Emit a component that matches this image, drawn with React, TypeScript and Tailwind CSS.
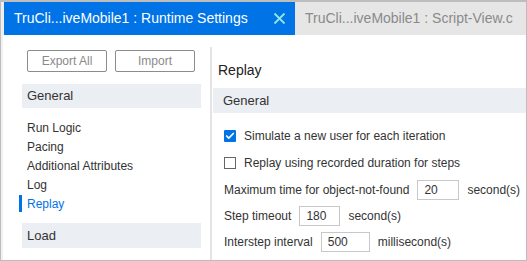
import { Check } from 'lucide-react'

const NAV = ['Run Logic', 'Pacing', 'Additional Attributes', 'Log', 'Replay']

function Field({ label, value, unit, width }: { label: string; value: string; unit: string; width: string }) {
  return (
    <div className="flex items-center h-[20px]">
      <span>{label}</span>
      <div className={`ml-[8px] h-[20px] ${width} border border-[#c8c8c8] bg-white px-[6px] flex items-center`}>{value}</div>
      <span className="ml-[8px]">{unit}</span>
    </div>
  )
}

export default function App() {
  return (
    <div className="w-[527px] h-[261px] flex flex-col bg-white border-t-2 border-x border-b border-[#bdbdbd] overflow-hidden text-[12px] text-[#333] font-['Liberation_Sans',Arial,sans-serif]">
      {/* tabs */}
      <div className="flex h-[33px] pl-[3px] bg-[#eeeeee] shrink-0">
        <div className="flex items-center justify-between bg-[#0073e7] w-[291px] pl-[10px] pr-[9px]">
          <span className="text-white text-[14px] whitespace-nowrap">TruCli...iveMobile1 : Runtime Settings</span>
          <svg width="13" height="13" viewBox="0 0 13 13">
            <path d="M1.5 1.5 L11.5 11.5 M11.5 1.5 L1.5 11.5" stroke="#8ee6df" strokeWidth="1.8" />
          </svg>
        </div>
        <div className="flex-1 flex items-center bg-[#e6e6e6] pl-[10px] overflow-hidden">
          <span className="text-[#8a8a8a] text-[14px] whitespace-nowrap">TruCli...iveMobile1 : Script-View.c</span>
        </div>
      </div>

      {/* body */}
      <div className="flex flex-1 min-h-0">
        <div className="w-[209px] shrink-0 pl-[19px] pr-[9px] pt-[15px] border-l-2 border-[#f0f0f0]">
          <div className="flex gap-[8px] pl-[5px]">
            <button className="w-[80px] h-[22px] border border-[#8c8c8c] rounded-[2px] text-[#8a8a8a]">Export All</button>
            <button className="w-[80px] h-[22px] border border-[#8c8c8c] rounded-[2px] text-[#8a8a8a]">Import</button>
          </div>
          <div className="mt-[12px] h-[24px] bg-[#ebeef2] pl-[5px] flex items-center text-[13px]">General</div>
          <div className="mt-[10px] flex flex-col">
            {NAV.map((n) => (
              <div key={n} className="h-[19px] flex items-center relative pl-[5px]">
                {n === 'Replay' && <span className="absolute left-[-3px] top-[1px] w-[3px] h-[17px] bg-[#0073e7]" />}
                <span className={n === 'Replay' ? 'text-[#0073e7]' : ''}>{n}</span>
              </div>
            ))}
          </div>
          <div className="mt-[10px] h-[25px] bg-[#ebeef2] pl-[5px] flex items-center text-[13px]">Load</div>
        </div>

        <div className="w-[2px] mt-[12px] bg-[#e4e4e4] shrink-0" />

        <div className="flex-1 pl-[1px] pt-[25px]">
          <div className="pl-[5px] text-[14px] leading-[20px] text-[#222]">Replay</div>
          <div className="mt-[8px] h-[25px] bg-[#ebeef2] pl-[10px] flex items-center text-[13px]">General</div>
          <div className="pl-[11px] mt-[13px] flex flex-col gap-[7px]">
            <div className="flex items-center h-[20px]">
              <span className="w-[12px] h-[12px] bg-[#0073e7] rounded-[1px] flex items-center justify-center">
                <Check className="w-[10px] h-[10px] text-white" strokeWidth={4} />
              </span>
              <span className="ml-[8px]">Simulate a new user for each iteration</span>
            </div>
            <div className="flex items-center h-[20px]">
              <span className="w-[12px] h-[12px] border border-[#666] bg-white" />
              <span className="ml-[8px]">Replay using recorded duration for steps</span>
            </div>
            <div className="flex flex-col gap-[6px]">
              <Field label="Maximum time for object-not-found" value="20" unit="second(s)" width="w-[42px]" />
              <Field label="Step timeout" value="180" unit="second(s)" width="w-[41px]" />
              <Field label="Interstep interval" value="500" unit="millisecond(s)" width="w-[49px]" />
            </div>
          </div>
        </div>
      </div>
    </div>
  )
}
